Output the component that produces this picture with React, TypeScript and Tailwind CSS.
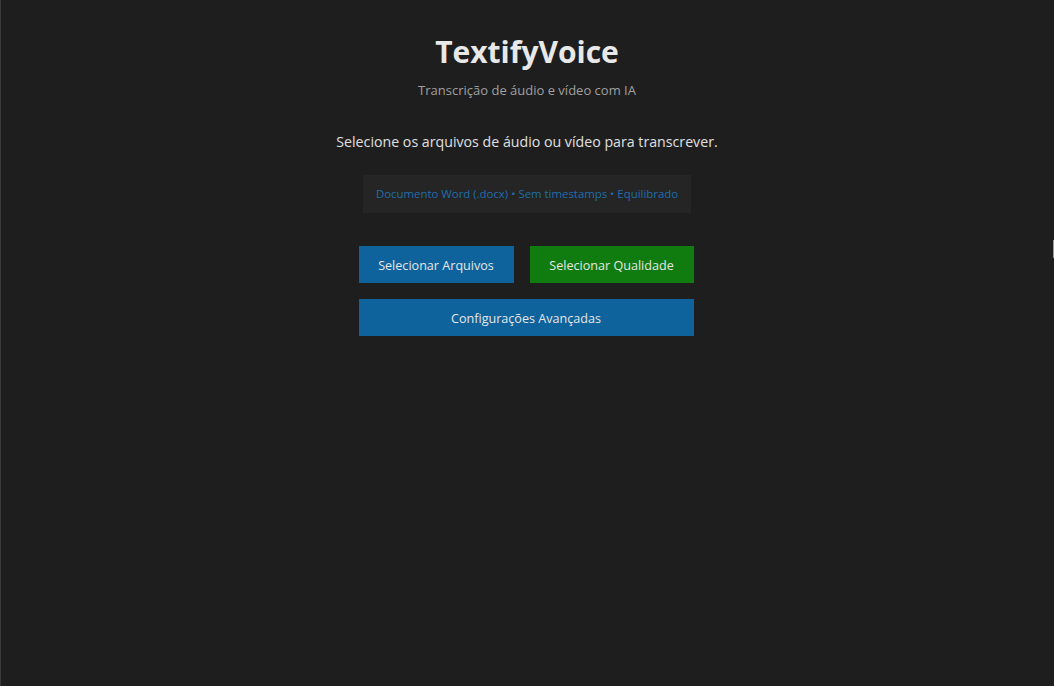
export default function App() {
  const font = { fontFamily: '"Segoe UI", "Open Sans", "Noto Sans", sans-serif' };
  return (
    <div
      className="relative w-[1054px] h-[686px] bg-[#1e1e1e] shadow-[inset_1px_0_0_#3a3a3a] flex flex-col items-center text-[#cccccc] overflow-hidden"
      style={font}
    >
      <h1 className="mt-[30px] text-[30px] leading-[44px] font-bold text-[#e8e8e8]">TextifyVoice</h1>
      <p className="mt-[7px] text-[13px] leading-[18px] text-[#a0a0a0]">Transcrição de áudio e vídeo com IA</p>
      <p className="mt-[33px] text-[14.2px] leading-[20px] text-[#e0e0e0]">
        Selecione os arquivos de áudio ou vídeo para transcrever.
      </p>
      <div className="mt-[23px] w-[328px] h-[38px] bg-[#252526] flex items-center justify-center text-[11.4px] text-[#1f6eaa]">
        Documento Word (.docx) • Sem timestamps • Equilibrado
      </div>
      <div className="mt-[33px] mr-[2px] flex flex-col gap-[16px] w-[335px]">
        <div className="flex gap-[16px]">
          <button className="w-[155px] h-[37px] pt-[3px] bg-[#0e639c] text-[#e6e6e6] text-[12.6px]">Selecionar Arquivos</button>
          <button className="w-[164px] h-[37px] pt-[3px] bg-[#107c10] text-[#e6e6e6] text-[12.6px]">Selecionar Qualidade</button>
        </div>
        <button className="w-full h-[37px] pt-[3px] bg-[#0e639c] text-[#e6e6e6] text-[12.6px]">Configurações Avançadas</button>
      </div>
      <div className="absolute right-0 top-[240px] w-[1px] h-[18px] bg-[#9a9a9a]" />
    </div>
  );
}
